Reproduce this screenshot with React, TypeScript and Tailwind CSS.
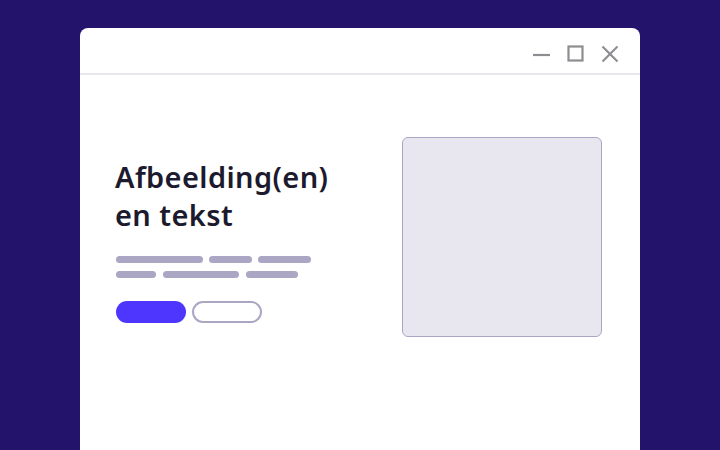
import React from "react";

export default function App() {
  return (
    <div className="w-[720px] h-[450px] overflow-hidden bg-[#24136a] pt-[28px] px-[80px]" style={{ fontFamily: '"Noto Sans", "Open Sans", sans-serif' }}>
      <div className="w-[560px] h-[422px] bg-white rounded-t-[8px] flex flex-col">
        <div className="h-[47px] border-b-2 border-[#e8e7ee] flex items-center justify-end pr-[21px] gap-[16px] pt-[7px]">
          <svg width="19" height="18" viewBox="0 0 19 18">
            <line x1="1" y1="10" x2="18" y2="10" stroke="#8e8e92" strokeWidth="2.2" />
          </svg>
          <svg width="18" height="18" viewBox="0 0 18 18">
            <rect x="1.5" y="1.5" width="14" height="14" fill="none" stroke="#8e8e92" strokeWidth="2.2" />
          </svg>
          <svg width="18" height="18" viewBox="0 0 18 18">
            <line x1="1.5" y1="1.5" x2="16.5" y2="16.5" stroke="#8e8e92" strokeWidth="2.2" />
            <line x1="16.5" y1="1.5" x2="1.5" y2="16.5" stroke="#8e8e92" strokeWidth="2.2" />
          </svg>
        </div>
        <div className="flex justify-between items-start pt-[62px] pl-[35px] pr-[38px]">
          <div className="pt-[21px] flex flex-col">
            <h1 className="text-[29px] leading-[38px] font-semibold text-[#1c1a2e] tracking-[0.4px]">
              Afbeelding(en)
              <br />
              en tekst
            </h1>
            <div className="mt-[22px] flex flex-col gap-[8px] pl-[1px]">
              <div className="flex gap-[6px]">
                <div className="w-[87px] h-[7px] rounded-full bg-[#aaa6c4]" />
                <div className="w-[43px] h-[7px] rounded-full bg-[#aaa6c4]" />
                <div className="w-[53px] h-[7px] rounded-full bg-[#aaa6c4]" />
              </div>
              <div className="flex gap-[7px]">
                <div className="w-[40px] h-[7px] rounded-full bg-[#aaa6c4]" />
                <div className="w-[76px] h-[7px] rounded-full bg-[#aaa6c4]" />
                <div className="w-[52px] h-[7px] rounded-full bg-[#aaa6c4]" />
              </div>
            </div>
            <div className="mt-[23px] flex gap-[6px] pl-[1px]">
              <div className="w-[70px] h-[22px] rounded-full bg-[#4f36ff]" />
              <div className="w-[70px] h-[22px] rounded-full border-2 border-[#aaa6c4] bg-white" />
            </div>
          </div>
          <div className="w-[200px] h-[200px] rounded-[6px] border border-[#aaa6c8] bg-[#e8e7f0]" />
        </div>
      </div>
    </div>
  );
}
